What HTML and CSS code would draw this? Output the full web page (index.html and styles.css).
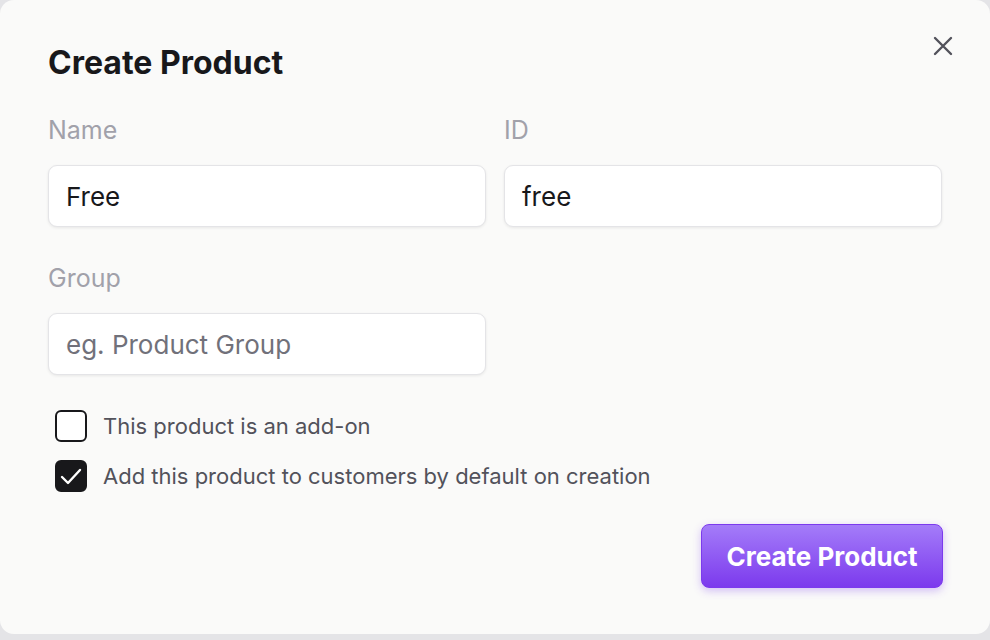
FILE: index.html
```html
<!DOCTYPE html>
<html>
<head>
<meta charset="utf-8">
<link rel="stylesheet" href="styles.css">
</head>
<body>
<div class="dialog">
  <button class="close" aria-label="Close">
    <svg width="22" height="22" viewBox="0 0 22 22" fill="none" stroke="#52525b" stroke-width="2.4" stroke-linecap="round"><path d="M3 3L19 19M19 3L3 19"/></svg>
  </button>
  <h1 class="title">Create Product</h1>
  <div class="grid">
    <div class="field">
      <label class="label">Name</label>
      <div class="input">Free</div>
    </div>
    <div class="field">
      <label class="label">ID</label>
      <div class="input">free</div>
    </div>
    <div class="field">
      <label class="label">Group</label>
      <div class="input placeholder">eg. Product Group</div>
    </div>
  </div>
  <div class="checks">
    <div class="check">
      <span class="box"></span>
      <span class="check-label">This product is an add-on</span>
    </div>
    <div class="check">
      <span class="box checked">
        <svg width="26" height="26" viewBox="0 0 26 26" fill="none" stroke="#fff" stroke-width="2.4" stroke-linecap="round" stroke-linejoin="round"><path d="M4 14L10 20L22 7"/></svg>
      </span>
      <span class="check-label">Add this product to customers by default on creation</span>
    </div>
  </div>
  <div class="actions">
    <button class="primary">Create Product</button>
  </div>
</div>
</body>
</html>
```
FILE: styles.css
```css
* { box-sizing: border-box; }
html, body { margin: 0; padding: 0; }
body {
  background: #e4e4e7;
  font-family: Inter, "Noto Sans", sans-serif;
  width: 990px;
  height: 640px;
  overflow: hidden;
}
.dialog {
  position: relative;
  height: 634px;
  background: #fafaf9;
  border-radius: 14px;
  padding: 43px 47px 0 48px;
}
.close {
  position: absolute;
  top: 35px;
  right: 36px;
  border: 0;
  background: none;
  padding: 0;
  width: 22px;
  height: 22px;
  display: flex;
}
.title {
  margin: 0;
  font-size: 32px;
  line-height: 40px;
  font-weight: 700;
  color: #18181b;
}
.grid {
  margin-top: 34px;
  display: grid;
  grid-template-columns: 438px 438px;
  column-gap: 18px;
  row-gap: 38px;
}
.field { display: flex; flex-direction: column; gap: 22px; }
.label {
  font-size: 25px;
  line-height: 26px;
  color: #a1a1aa;
}
.input {
  height: 62px;
  background: #fff;
  border: 1px solid #e4e4e7;
  border-radius: 9px;
  box-shadow: 0 1px 3px rgba(0,0,0,0.08);
  padding: 0 17px;
  display: flex;
  align-items: center;
  font-size: 26px;
  color: #18181b;
}
.input.placeholder { color: #71717a; }
.checks {
  margin-top: 35px;
  padding-left: 7px;
  display: flex;
  flex-direction: column;
  gap: 18px;
}
.check { display: flex; align-items: center; gap: 16px; }
.box {
  width: 32px;
  height: 32px;
  border: 2px solid #18181b;
  border-radius: 6px;
  background: #fff;
  display: flex;
  align-items: center;
  justify-content: center;
}
.box.checked { background: #18181b; }
.check-label {
  font-size: 22px;
  color: #52525b;
}
.actions {
  margin-top: 32px;
  display: flex;
  justify-content: flex-end;
}
.primary {
  width: 242px;
  height: 64px;
  border: 1px solid #7c3aed;
  border-radius: 8px;
  background: linear-gradient(180deg, #a47cf9 0%, #7c3aed 100%);
  box-shadow: 0 3px 8px rgba(124,58,237,0.3);
  color: #fff;
  font-family: Inter, "Noto Sans", sans-serif;
  font-size: 26px;
  font-weight: 700;
  padding: 0;
}
```
